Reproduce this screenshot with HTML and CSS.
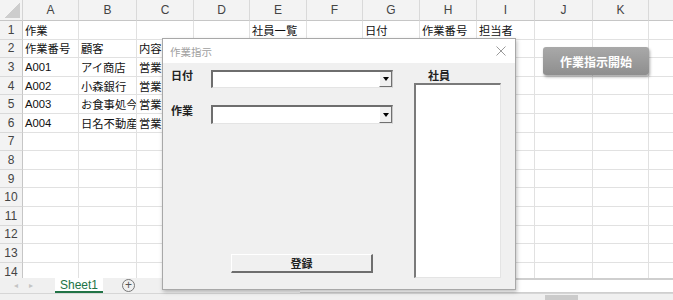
FILE: index.html
```html
<!DOCTYPE html>
<html lang="ja">
<head>
    <meta charset="UTF-8">
    <title>作業指示</title>
    <link rel="stylesheet" href="styles.css">
</head>
<body>
    <div class="window">
        <div class="grid" id="grid"></div>

        <div class="tabbar">
            <div class="tabs">
                <span class="nav">&#9666;</span>
                <span class="nav">&#9656;</span>
                <div class="tab">Sheet1</div>
                <div class="add">+</div>
            </div>
            <div class="hscroll"></div>
        </div>
        <div class="statusbar">
            <div class="thumb"></div>
        </div>

        <button class="start-btn">作業指示開始</button>

        <div class="dialog">
            <div class="dialog-title">
                <span>作業指示</span>
                <svg class="close" width="10" height="10" viewBox="0 0 10 10">
                    <path d="M0.5 0.5 L9.5 9.5 M9.5 0.5 L0.5 9.5" stroke="#9a9a9a" stroke-width="1"/>
                </svg>
            </div>
            <div class="dialog-body">
                <div class="left">
                    <div class="field">
                        <label>日付</label>
                        <div class="combo"><div class="drop"></div></div>
                    </div>
                    <div class="field">
                        <label>作業</label>
                        <div class="combo"><div class="drop"></div></div>
                    </div>
                    <button class="submit">登録</button>
                </div>
                <div class="right">
                    <div class="list-label">社員</div>
                    <div class="listbox"></div>
                </div>
            </div>
        </div>
    </div>

    <script>
        const cols = ['A', 'B', 'C', 'D', 'E', 'F', 'G', 'H', 'I', 'J', 'K', ''];
        const data = {
            1: { A: '作業', E: '社員一覧', G: '日付', H: '作業番号', I: '担当者' },
            2: { A: '作業番号', B: '顧客', C: '内容' },
            3: { A: 'A001', B: 'アイ商店', C: '営業' },
            4: { A: 'A002', B: '小森銀行', C: '営業' },
            5: { A: 'A003', B: 'お食事処今', C: '営業' },
            6: { A: 'A004', B: '日名不動産', C: '営業' }
        };

        const grid = document.getElementById('grid');
        let html = '<div class="corner"><div class="tri"></div></div>';
        cols.forEach(c => { html += `<div class="colhead">${c}</div>`; });
        for (let r = 1; r <= 14; r++) {
            html += `<div class="rowhead">${r}</div>`;
            cols.forEach(c => {
                const v = (data[r] && data[r][c]) || '';
                html += `<div class="cell">${v}</div>`;
            });
        }
        grid.innerHTML = html;
    </script>
</body>
</html>
```

FILE: styles.css
```css
* {
    margin: 0;
    padding: 0;
    box-sizing: border-box;
}

body {
    font-family: 'Liberation Sans', 'Noto Sans CJK JP', sans-serif;
    background: #fff;
}

.window {
    position: relative;
    width: 673px;
    height: 300px;
    overflow: hidden;
    display: flex;
    flex-direction: column;
}

/* spreadsheet grid */
.grid {
    height: 278px;
    overflow: hidden;
    display: grid;
    grid-template-columns: 23px 56px 58px 57px 56px 57px 56px 57px 57px 58px 58px 56px 40px;
    grid-template-rows: 21px;
    grid-auto-rows: 18.6px;
}

.corner {
    background: #f3f3f3;
    border-right: 1px solid #d4d4d4;
    border-bottom: 1px solid #c6c6c6;
    display: flex;
    align-items: flex-end;
    justify-content: flex-end;
    padding: 0 2px 2px 0;
}

.tri {
    width: 15px;
    height: 15px;
    background: linear-gradient(135deg, transparent 50%, #cdcdcd 50%);
}

.colhead {
    background: #f3f3f3;
    border-right: 1px solid #d9d9d9;
    border-bottom: 1px solid #c6c6c6;
    color: #444;
    font-size: 12px;
    display: flex;
    align-items: center;
    justify-content: center;
}

.rowhead {
    background: #f3f3f3;
    border-right: 1px solid #c6c6c6;
    border-bottom: 1px solid #d9d9d9;
    color: #444;
    font-size: 12px;
    display: flex;
    align-items: center;
    justify-content: center;
}

.cell {
    border-right: 1px solid #e1e1e1;
    border-bottom: 1px solid #e1e1e1;
    font-size: 11.3px;
    color: #111;
    padding-left: 2px;
    white-space: nowrap;
    overflow: hidden;
    display: flex;
    align-items: center;
}

/* sheet tabs */
.tabbar {
    height: 15px;
    display: flex;
}

.tabs {
    width: 300px;
    background: #f0f0f0;
    display: flex;
    align-items: center;
}

.nav {
    color: #c4c4c4;
    font-size: 8px;
    width: 15px;
    text-align: center;
}

.nav:first-child {
    margin-left: 8px;
}

.tab {
    margin-left: 17px;
    width: 48px;
    height: 15px;
    background: #fff;
    color: #217346;
    font-size: 12px;
    text-align: center;
    line-height: 14px;
    border-bottom: 2px solid #217346;
}

.add {
    margin-left: 19px;
    width: 13px;
    height: 13px;
    border: 1px solid #777;
    border-radius: 50%;
    color: #555;
    font-size: 12px;
    line-height: 10px;
    text-align: center;
}

.hscroll {
    flex: 1;
    background: #fff;
    border-top: 2px solid #cfcfcf;
    border-bottom: 1px solid #cfcfcf;
}

.statusbar {
    flex: 1;
    background: #f0f0f0;
    border-top: 1px solid #d6d6d6;
    position: relative;
}

.thumb {
    position: absolute;
    left: 545px;
    top: 1px;
    width: 33px;
    height: 8px;
    background: #cbcbcb;
}

/* macro button on the sheet */
.start-btn {
    position: absolute;
    left: 543px;
    top: 47px;
    width: 106px;
    height: 28px;
    border: none;
    border-radius: 3px;
    background: linear-gradient(#a9a9a9, #8e8e8e);
    box-shadow: 1px 2px 3px rgba(0, 0, 0, 0.35);
    color: #fff;
    font-family: 'Noto Sans CJK JP', sans-serif;
    font-weight: bold;
    font-size: 12px;
}

/* user form */
.dialog {
    position: absolute;
    left: 162px;
    top: 38px;
    width: 354px;
    height: 252px;
    border: 1px solid #a8a8a8;
    box-shadow: 1px 2px 4px rgba(0, 0, 0, 0.25);
    background: #f0f0f0;
    display: flex;
    flex-direction: column;
}

.dialog-title {
    height: 24px;
    background: #fff;
    color: #a0a0a0;
    font-family: 'Noto Sans CJK JP', sans-serif;
    font-size: 10.5px;
    display: flex;
    align-items: center;
    justify-content: space-between;
    padding: 0 9px 0 7px;
}

.dialog-body {
    flex: 1;
    display: flex;
    font-family: 'Noto Sans CJK JP', sans-serif;
    font-size: 11px;
    font-weight: bold;
    color: #222;
}

.left {
    width: 251px;
    padding: 6px 0 0 8px;
    display: flex;
    flex-direction: column;
}

.field {
    display: flex;
    align-items: flex-start;
    margin-bottom: 16px;
}

.field label {
    width: 40px;
    line-height: 13px;
}

.combo {
    width: 182px;
    height: 18px;
    margin-top: 1px;
    background: #fff;
    border-style: solid;
    border-width: 2px 1px 1px 2px;
    border-color: #6e6e6e #c8c8c8 #e4e4e4 #6e6e6e;
    display: flex;
    justify-content: flex-end;
}

.field + .field .combo {
    height: 19px;
}

.drop {
    width: 13px;
    background: #f0f0f0;
    border-left: 1px solid #fff;
    border-right: 1px solid #707070;
    border-bottom: 1px solid #707070;
    display: flex;
    align-items: center;
    justify-content: center;
}

.drop::after {
    content: '';
    border-left: 3.5px solid transparent;
    border-right: 3.5px solid transparent;
    border-top: 4px solid #000;
}

.submit {
    margin: 114px 0 0 60px;
    width: 142px;
    height: 19px;
    background: #f0f0f0;
    border-style: solid;
    border-width: 1px 2px 2px 1px;
    border-color: #fff #6e6e6e #6e6e6e #fff;
    font-family: 'Noto Sans CJK JP', sans-serif;
    font-weight: bold;
    font-size: 11px;
    color: #222;
}

.right {
    display: flex;
    flex-direction: column;
}

.list-label {
    margin: 6px 0 0 14px;
    line-height: 13px;
}

.listbox {
    margin-top: 1px;
    width: 87px;
    height: 195px;
    background: #fff;
    border-style: solid;
    border-width: 2px 1px 1px 2px;
    border-color: #7a7a7a #e4e4e4 #e4e4e4 #7a7a7a;
}
```
